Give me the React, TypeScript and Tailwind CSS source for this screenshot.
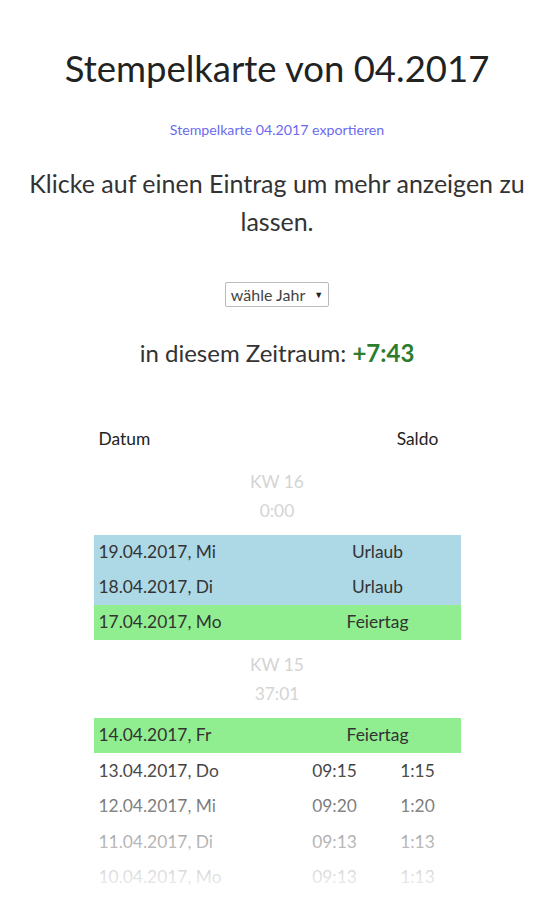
import React from 'react'

type Row =
  | { kind: 'week'; kw: string; total: string }
  | { kind: 'day'; date: string; label?: string; tone?: 'blue' | 'green'; start?: string; saldo?: string }

const rows: Row[] = [
  { kind: 'week', kw: 'KW 16', total: '0:00' },
  { kind: 'day', date: '19.04.2017, Mi', label: 'Urlaub', tone: 'blue' },
  { kind: 'day', date: '18.04.2017, Di', label: 'Urlaub', tone: 'blue' },
  { kind: 'day', date: '17.04.2017, Mo', label: 'Feiertag', tone: 'green' },
  { kind: 'week', kw: 'KW 15', total: '37:01' },
  { kind: 'day', date: '14.04.2017, Fr', label: 'Feiertag', tone: 'green' },
  { kind: 'day', date: '13.04.2017, Do', start: '09:15', saldo: '1:15' },
  { kind: 'day', date: '12.04.2017, Mi', start: '09:20', saldo: '1:20' },
  { kind: 'day', date: '11.04.2017, Di', start: '09:13', saldo: '1:13' },
  { kind: 'day', date: '10.04.2017, Mo', start: '09:13', saldo: '1:13' },
]

export default function App() {
  return (
    <div className="relative min-h-[900px] bg-white text-[#333] font-['Lato','Open_Sans',sans-serif] overflow-hidden">
      <div className="flex flex-col items-center pt-[43px]">
        <h1 className="text-[36.5px] leading-[50px] text-[#222]">Stempelkarte von 04.2017</h1>
        <a href="#" className="mt-[28px] text-[14.2px] leading-[18px] text-[#6b6bf0]">
          Stempelkarte 04.2017 exportieren
        </a>
        <p className="mt-[25px] w-[540px] text-center text-[25px] leading-[38px] text-[#333]">
          Klicke auf einen Eintrag um mehr anzeigen zu lassen.
        </p>
        <div className="mt-[42px] flex h-[25px] items-center gap-[9px] border border-[#bbb] rounded-[2px] px-[5px] text-[16px] text-[#444]">
          <span>wähle Jahr</span>
          <span className="text-[9px] text-[#222]">▼</span>
        </div>
        <div className="mt-[30px] text-[24px] leading-[32px] text-[#333]">
          in diesem Zeitraum: <span className="font-bold text-[#2e7d2e]">+7:43</span>
        </div>

        <table className="mt-[53px] w-[367px] border-collapse text-[17.4px]">
          <colgroup>
            <col className="w-[201px]" />
            <col className="w-[80px]" />
            <col className="w-[86px]" />
          </colgroup>
          <thead>
            <tr className="h-[35px]">
              <th className="pl-[5px] text-left font-normal text-[#222]">Datum</th>
              <th />
              <th className="text-center font-normal text-[#222]">Saldo</th>
            </tr>
          </thead>
          <tbody>
            {rows.map((r, i) => {
              if (r.kind === 'week') {
                return (
                  <tr key={i}>
                    <td colSpan={3} className="py-[10px] text-center leading-[29px] text-[#d4d4d4]">
                      <div>{r.kw}</div>
                      <div>{r.total}</div>
                    </td>
                  </tr>
                )
              }
              const bg = r.tone === 'blue' ? 'bg-[#add8e6]' : r.tone === 'green' ? 'bg-[#90ee90]' : ''
              return (
                <tr key={i} className={`${r.tone ? 'h-[35px]' : 'h-[35.5px]'} ${bg}`}>
                  <td className="pl-[5px] text-[#333]">{r.date}</td>
                  {r.label ? (
                    <td colSpan={2} className="text-center text-[#333]">{r.label}</td>
                  ) : (
                    <>
                      <td className="text-center">{r.start}</td>
                      <td className="text-center">{r.saldo}</td>
                    </>
                  )}
                </tr>
              )
            })}
          </tbody>
        </table>
      </div>
      <div className="pointer-events-none absolute inset-x-0 top-[758px] h-[142px] bg-gradient-to-b from-white/0 via-white/55 to-white" />
    </div>
  )
}
